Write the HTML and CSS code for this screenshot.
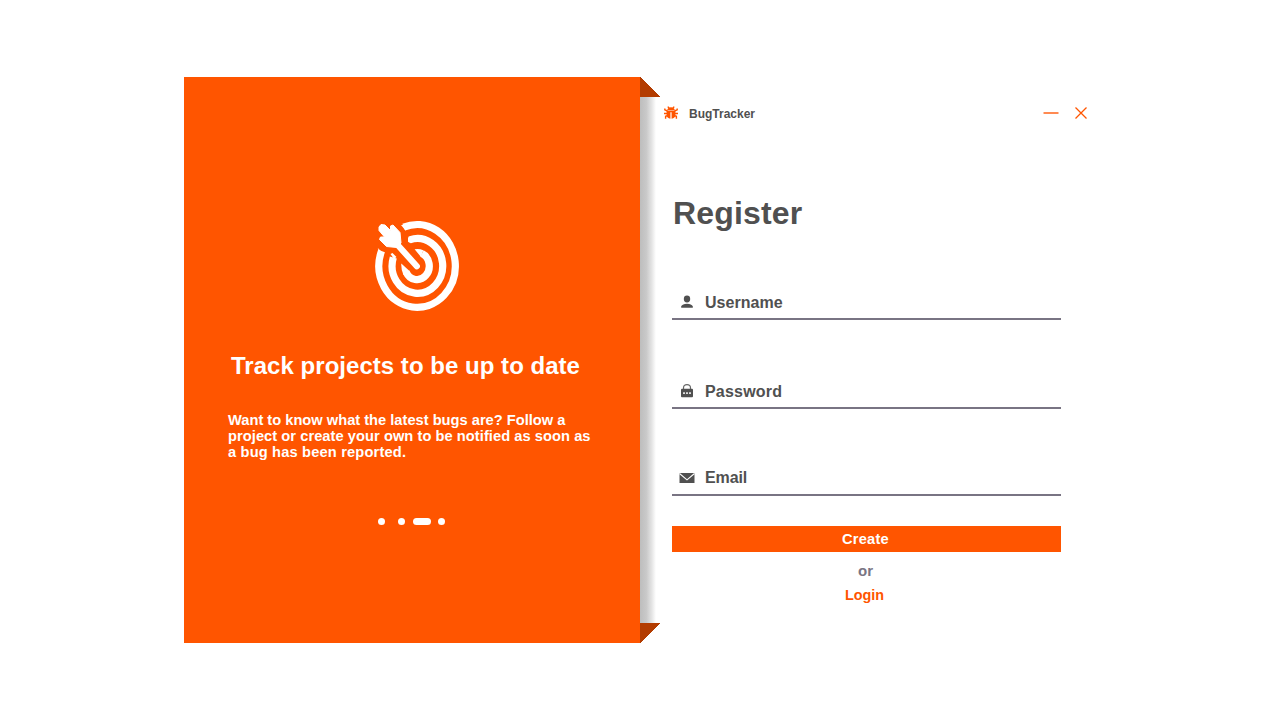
FILE: index.html
```html
<!DOCTYPE html>
<html lang="en">
<head>
<meta charset="utf-8">
<title>BugTracker</title>
<link rel="stylesheet" href="styles.css">
</head>
<body>
<main class="window">
  <section class="promo">
    <svg class="target" width="105" height="110" viewBox="0 0 105 110">
      <g fill="none" stroke="#fff" stroke-width="7.2">
        <path d="M38.7 17.2A38.2 41.4 0 1 1 16.5 41"/>
        <path d="M44.7 29.8A25.3 27.4 0 1 1 28.3 47.6"/>
        <path d="M57 43.6A12.2 13.6 0 1 1 41.1 62"/>
        <path d="M30 32L51.8 56.3" stroke-width="6.2" stroke-linecap="round"/>
      </g>
      <path d="M36.3 53.5L44.5 61L38.5 65Q36 60 36.3 53.5ZM49.6 39.3Q54 38.3 58.3 40.3L56 47Z" fill="#fff"/>
      <path d="M36 15L40.5 20.5L42 15ZM43 27V31.7L45.5 33.3L48 30ZM12.8 38L18.5 43.5L15 46ZM25.5 44L27.5 43L31.5 47L29 49Z" fill="#fff"/>
      <path d="M16 14.5L20 15L25.5 20.5V16L28 15L35 22.5L36 33L32 37.5L21.5 36.5L14.5 29.5L15.5 27H19.5L14 20.5V17Z" fill="#fff" stroke="#fff" stroke-width="1" stroke-linejoin="round"/>
    </svg>
    <h2 class="promo-title">Track projects to be up to date</h2>
    <p class="promo-text"><span class="opening">Want to know what the latest bugs are? Follow a</span><br>project or create your own to be notified as soon as<br><span class="closing">a bug has been reported.</span></p>
    <div class="dots"><i class="dot first"></i><i class="dot"></i><i class="dot active"></i><i class="dot"></i></div>
  </section>
  <div class="fold">
    <svg class="corner" width="20" height="20" shape-rendering="crispEdges"><path d="M0 0L20 20H0Z"/></svg>
    <div class="shade"></div>
    <svg class="corner" width="20" height="20" shape-rendering="crispEdges"><path d="M0 0H20L0 20Z"/></svg>
  </div>
  <section class="panel">
    <header class="bar">
      <svg width="14" height="14" viewBox="0 0 14 14">
        <path d="M3.2 4Q4 1.3 7 1.3T10.8 4ZM2.6 4.6H11.4V9Q11.2 12.2 7.6 12.8V6.3H6.4V12.8Q2.8 12.2 2.6 9Z" fill="#ff5500"/>
        <path d="M3.8.6L5.2 2.2M10.2.6L8.8 2.2M.8 2.5V3.8L3.5 5M13.2 2.5V3.8L10.5 5M0 7.5H4M14 7.5H10M4 9.5L1.6 10.3V12.8M10 9.5L12.4 10.3V12.8" fill="none" stroke="#ff5500" stroke-width="1.4"/>
      </svg>
      <span class="brand">BugTracker</span>
      <svg class="controls" width="46" height="14" viewBox="0 0 46 14"><path d="M.5 7H15.5" stroke="#ff8a52" stroke-width="2"/><path d="M32.5 1.5L43.5 12.5M43.5 1.5L32.5 12.5" stroke="#ff5500" stroke-width="1.3"/></svg>
    </header>
    <h1 class="heading">Register</h1>
    <form class="form">
      <label class="field"><svg width="16" height="16" viewBox="0 0 16 16" fill="#505050"><ellipse cx="8" cy="5" rx="3.2" ry="3.4"/><path d="M2.2 13.7V12.3Q3.5 9.8 8 9.8T13.8 12.3V13.7Z"/></svg><span class="label">Username</span></label>
      <label class="field password"><svg width="16" height="16" viewBox="0 0 16 16"><path d="M4.5 6V4.7Q4.7 1.7 8 1.7T11.5 4.7V6" fill="none" stroke="#666" stroke-width="1.2"/><rect x="2" y="5.8" width="12" height="8.4" rx="1" fill="#505050"/><path d="M4 9.2H6V11H4ZM7 9.2H9V11H7ZM10 9.2H12V11H10Z" fill="#ddd"/></svg><span class="label">Password</span></label>
      <label class="field email"><svg width="16" height="16" viewBox="0 0 16 16"><path d="M.5 3H15.5V13H.5Z" fill="#505050"/><path d="M.5 3.5L8 9.8L15.5 3.5" fill="none" stroke="#fff" stroke-width="1.1"/></svg><span class="label">Email</span></label>
      <button class="create" type="button">Create</button>
      <div class="or">or</div>
      <a class="login">Login</a>
    </form>
  </section>
</main>
</body>
</html>
```

FILE: styles.css
```css
* { box-sizing: border-box; }
body { margin: 0; padding: 77px 184px; height: 720px; overflow: hidden; background: #fff; font-family: "Liberation Sans", Arial, sans-serif; font-weight: bold; }
.window { display: flex; width: 912px; height: 566px; }
.promo { width: 456px; flex: none; background: #ff5500; color: #fff; padding-top: 133px; }
.target { display: block; margin-left: 181px; }
.promo-title { margin: 31px 0 0 47px; font-size: 24px; line-height: 30px; letter-spacing: .03px; white-space: nowrap; }
.promo-text { margin: 31px 0 0 44px; font-size: 14.67px; line-height: 16px; letter-spacing: .05px; white-space: nowrap; }
.opening { letter-spacing: 0; }
.closing { letter-spacing: .16px; }
.dots { display: flex; margin: 58px 0 0 194px; gap: 7px; }
.dot { width: 7px; height: 7px; border-radius: 4px; background: #fff; }
.first { margin-right: 6px; }
.dot.active { width: 18px; margin-left: 1px; }
.fold { width: 20px; flex: none; display: flex; flex-direction: column; }
.corner { display: block; fill: #b33c00; }
.shade { flex: 1; width: 16px; background: linear-gradient(90deg, #bdbdbd 0%, #c9c9c9 40%, #e3e3e3 72%, #fff 100%); }
.panel { flex: 1; padding: 29px 0 0 12px; }
.bar { display: flex; align-items: center; height: 14px; margin-left: -8px; }
.brand { margin-left: 11px; padding-top: 2px; font-size: 12px; line-height: 14px; color: #505050; }
.controls { margin-left: auto; margin-right: 7px; }
.heading { margin: 73px 0 0 1px; font-size: 32px; line-height: 40px; letter-spacing: .15px; color: #505050; }
.form { width: 389px; padding-top: 61px; }
.field { display: flex; align-items: center; height: 26px; padding: 0 0 8px 7px; margin-bottom: 63px; border-bottom: 2px solid #797483; color: #505050; font-size: 16px; line-height: 16px; }
.label { margin-left: 10px; padding-top: 2px; letter-spacing: .05px; }
.password { margin-bottom: 61px; }
.email { margin-bottom: 30px; }
.email .label { padding-top: 0; letter-spacing: -.1px; }
.password .label { letter-spacing: .2px; }
.create { display: block; width: 100%; height: 26px; border: 0; padding: 0 2px 0 0; background: #ff5500; color: #fff; font: bold 14.67px/26px "Liberation Sans", Arial, sans-serif; letter-spacing: .2px; }
.or { margin-top: 9px; padding-right: 2px; text-align: center; font-size: 15px; line-height: 20px; color: #797483; }
.login { display: block; margin-top: 4px; padding-right: 4px; text-align: center; font-size: 14.4px; line-height: 20px; color: #ff5500; }
```
